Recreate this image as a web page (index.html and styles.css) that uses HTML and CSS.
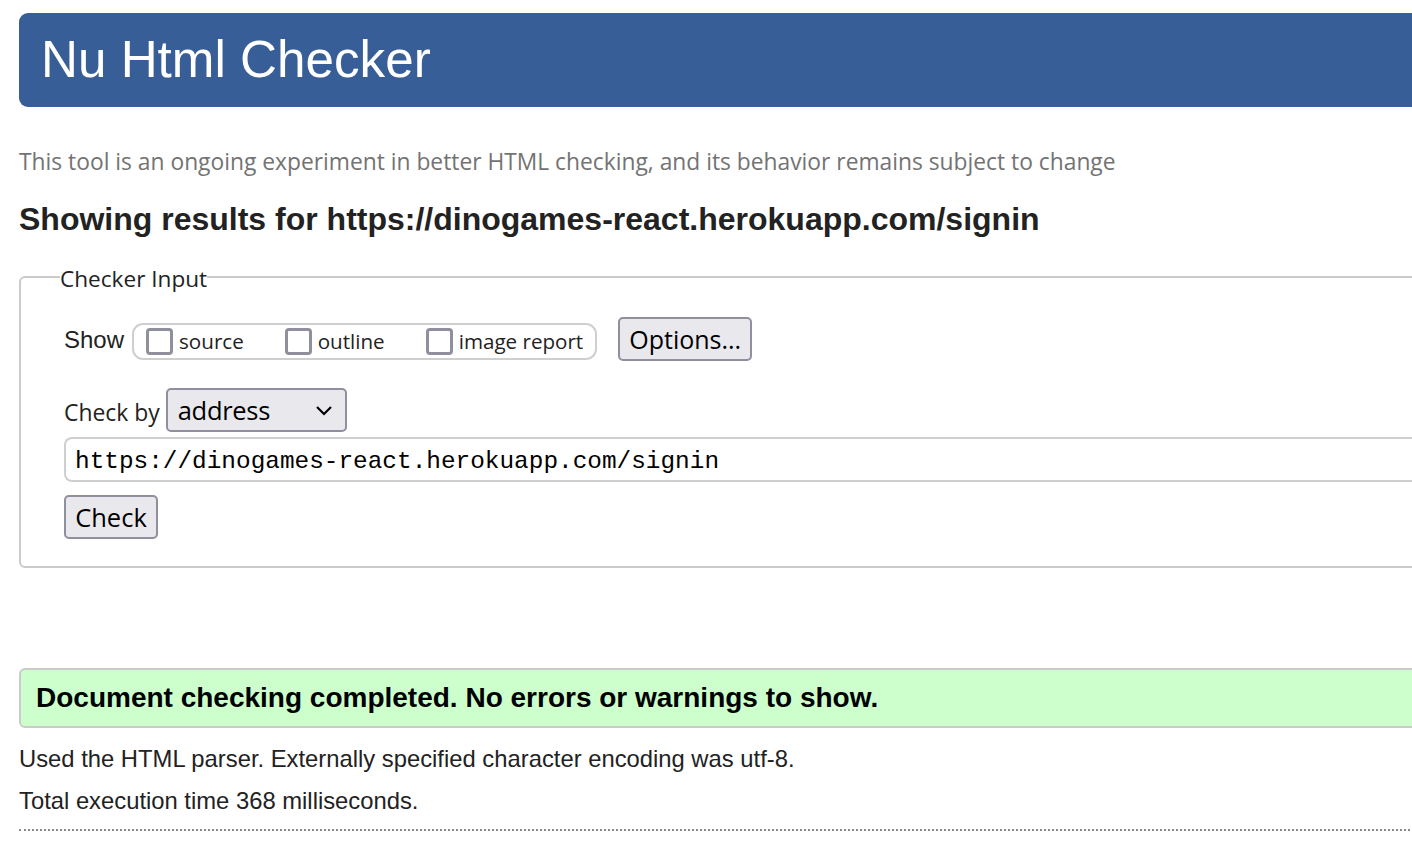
FILE: index.html
```html
<!DOCTYPE html>
<html lang="en">
<head>
<meta charset="utf-8">
<title>Nu Html Checker</title>
<link rel="stylesheet" href="styles.css">
</head>
<body>
<header class="banner"><h1 class="banner-title">Nu Html Checker</h1></header>
<p class="intro">This tool is an ongoing experiment in better HTML checking, and its behavior remains subject to change</p>
<h2 class="results-title">Showing results for https://dinogames-react.herokuapp.com/signin</h2>
<fieldset class="checker">
  <legend class="checker-legend">Checker Input</legend>
  <div class="show-row">
    <span class="show-label">Show</span>
    <div class="show-group">
      <label class="opt"><span class="box"></span>source</label>
      <label class="opt"><span class="box"></span>outline</label>
      <label class="opt"><span class="box"></span>image report</label>
    </div>
    <button class="btn btn-options" type="button">Options...</button>
  </div>
  <div class="checkby-row">
    <span class="checkby-label">Check by</span>
    <div class="select">
      <span class="select-value">address</span>
      <svg class="chev" width="18" height="12" viewBox="0 0 18 12"><path d="M2 3 L9 10 L16 3" fill="none" stroke="#000" stroke-width="2.2"/></svg>
    </div>
  </div>
  <div class="url-input">https://dinogames-react.herokuapp.com/signin</div>
  <button class="btn btn-check" type="button">Check</button>
</fieldset>
<div class="success">Document checking completed. No errors or warnings to show.</div>
<p class="details details-first">Used the HTML parser. Externally specified character encoding was utf-8.</p>
<p class="details">Total execution time 368 milliseconds.</p>
<hr class="dotted">
</body>
</html>
```
FILE: styles.css
```css
html, body { margin: 0; padding: 0; overflow: hidden; }
body {
  background: #fff;
  color: #222;
  font-family: "Liberation Sans", Arial, sans-serif;
  padding: 13px 2px 0 19px;
  width: 1391px;
}
.banner {
  background: #375e96;
  border-radius: 9px 0 0 9px;
  margin-right: -10px;
  height: 94px;
  display: flex;
  align-items: center;
  padding-left: 22px;
}
.banner-title {
  margin: 0;
  color: #fff;
  font-weight: normal;
  font-size: 51.2px;
  line-height: 1;
}
.intro {
  margin: 40px 0 0;
  color: #737373;
  font-family: "Open Sans", sans-serif;
  font-size: 22.8px;
  line-height: 30px;
}
.results-title {
  margin: 23px 0 0;
  font-size: 32px;
  line-height: 38px;
  font-weight: bold;
  color: #222;
}
.checker {
  margin: 23px -12px 0 0;
  border: 2px solid #cbcbcb;
  border-radius: 6px 0 0 6px;
  padding: 12px 0 27px 43px;
  min-width: 0;
}
.checker-legend {
  font-family: "Open Sans", sans-serif;
  font-size: 22.6px;
  line-height: 31px;
  color: #222;
  padding: 0;
  margin-left: -4px;
  position: relative;
  top: 2px;
}
.show-row {
  display: flex;
  align-items: center;
  margin-top: 13px;
}
.show-label {
  font-size: 24px;
  margin-right: 8px;
  position: relative;
  top: 1px;
}
.show-group {
  display: flex;
  align-items: center;
  border: 2px solid #cfcfcf;
  border-radius: 11px;
  height: 33px;
  padding: 0 12px;
  gap: 41px;
  position: relative;
  top: 2px;
}
.opt {
  display: flex;
  align-items: center;
  font-family: "Open Sans", sans-serif;
  font-size: 20.6px;
  color: #222;
}
.box {
  flex: none;
  width: 21px;
  height: 21px;
  border: 3px solid #8f8f9d;
  border-radius: 4px;
  margin-right: 6px;
  background: #fff;
}
.btn {
  font-family: "Open Sans", sans-serif;
  background: #e9e9ed;
  border: 2px solid #8f8f9d;
  border-radius: 5px;
  color: #000;
  height: 44px;
  padding: 0;
  font-size: 25px;
}
.btn-options {
  margin-left: 21px;
  width: 134px;
}
.checkby-row {
  display: flex;
  align-items: center;
  margin-top: 27px;
}
.checkby-label {
  font-family: "Open Sans", sans-serif;
  font-size: 22.9px;
  margin-right: 6px;
  color: #222;
  position: relative;
  top: 2px;
}
.select {
  width: 181px;
  height: 44px;
  box-sizing: border-box;
  background: #e9e9ed;
  border: 2px solid #8f8f9d;
  border-radius: 5px;
  display: flex;
  align-items: center;
  justify-content: space-between;
  padding: 0 12px 0 10px;
}
.select-value {
  font-family: "Open Sans", sans-serif;
  font-size: 25.5px;
  color: #000;
  letter-spacing: -0.3px;
}
.url-input {
  margin-top: 5px;
  height: 45px;
  box-sizing: border-box;
  border: 2px solid #cfcfcf;
  border-right: none;
  border-radius: 8px 0 0 8px;
  display: flex;
  align-items: center;
  padding: 3px 0 0 9px;
  font-family: "Liberation Mono", monospace;
  font-size: 24.4px;
  color: #000;
}
.btn-check {
  margin-top: 13px;
  width: 94px;
  display: block;
  font-size: 25.5px;
}
.success {
  margin: 100px -12px 0 0;
  height: 60px;
  box-sizing: border-box;
  background: #ccffcc;
  border: 2px solid #cbcbcb;
  border-radius: 6px 0 0 6px;
  display: flex;
  align-items: center;
  padding-left: 15px;
  font-weight: bold;
  font-size: 28px;
  color: #000;
}
.details {
  margin: 0;
  font-size: 23.8px;
  line-height: 42px;
  color: #222;
}
.details-first { margin-top: 10px; }
.dotted {
  margin: 7px 0 0;
  border: none;
  border-top: 2px dotted #8a8a8a;
  height: 0;
}
```
